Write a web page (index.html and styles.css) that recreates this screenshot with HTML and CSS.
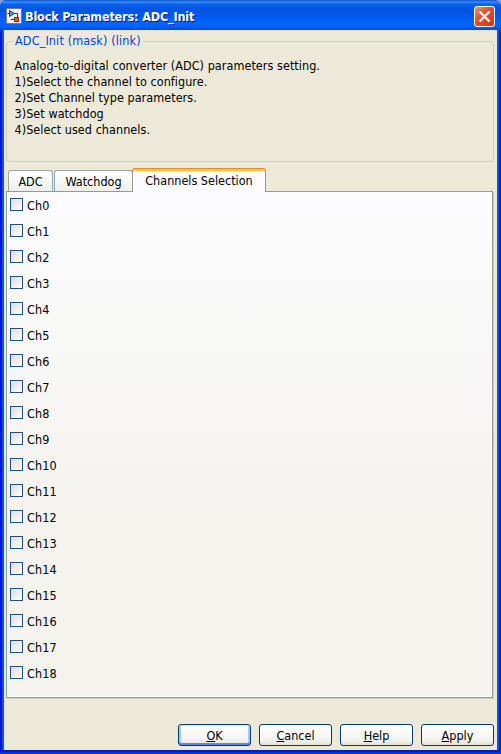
FILE: index.html
```
<!DOCTYPE html>
<html lang="en">
<head>
<meta charset="utf-8">
<title>Block Parameters: ADC_Init</title>
<link rel="stylesheet" href="styles.css">
</head>
<body>
<div class="window">
  <header class="titlebar">
    <svg class="app-icon" width="16" height="16" viewBox="0 0 16 16">
      <rect width="16" height="16" fill="#777"/>
      <rect x="1" y="1" width="14" height="14" fill="#f1efee"/>
      <path d="M8 5.500h3.500V9M1.500 5.500H3M5 11.500H8" fill="none" stroke="#26384a"/>
      <path d="M3.500 2.500v6l5-3z" fill="#35a7cf" stroke="#26475a"/>
      <rect x="8.500" y="9.500" width="4" height="4" fill="#ee541f" stroke="#84341c"/>
    </svg>
    <h1 class="title">Block Parameters: ADC_Init</h1>
    <button class="close" aria-label="Close">
      <svg width="19" height="19" viewBox="0 0 19 19"><path d="M4.500 4.500l10 10M14.500 4.500l-10 10" stroke="#fff" stroke-width="2.300"/></svg>
    </button>
  </header>
  <main class="client">
    <fieldset class="mask">
      <legend>ADC_Init (mask) (link)</legend>
      <p>Analog-to-digital converter (ADC) parameters setting.</p>
      <p>1)Select the channel to configure.</p>
      <p>2)Set Channel type parameters.</p>
      <p>3)Set watchdog</p>
      <p>4)Select used channels.</p>
    </fieldset>
    <nav class="tabs">
      <button class="tab tab-adc">ADC</button>
      <button class="tab tab-watchdog">Watchdog</button>
      <button class="tab tab-channels active">Channels Selection</button>
    </nav>
    <section class="panel">
      <label><input type="checkbox"><span>Ch0</span></label>
      <label><input type="checkbox"><span>Ch1</span></label>
      <label><input type="checkbox"><span>Ch2</span></label>
      <label><input type="checkbox"><span>Ch3</span></label>
      <label><input type="checkbox"><span>Ch4</span></label>
      <label><input type="checkbox"><span>Ch5</span></label>
      <label><input type="checkbox"><span>Ch6</span></label>
      <label><input type="checkbox"><span>Ch7</span></label>
      <label><input type="checkbox"><span>Ch8</span></label>
      <label><input type="checkbox"><span>Ch9</span></label>
      <label><input type="checkbox"><span>Ch10</span></label>
      <label><input type="checkbox"><span>Ch11</span></label>
      <label><input type="checkbox"><span>Ch12</span></label>
      <label><input type="checkbox"><span>Ch13</span></label>
      <label><input type="checkbox"><span>Ch14</span></label>
      <label><input type="checkbox"><span>Ch15</span></label>
      <label><input type="checkbox"><span>Ch16</span></label>
      <label><input type="checkbox"><span>Ch17</span></label>
      <label><input type="checkbox"><span>Ch18</span></label>
    </section>
    <footer class="actions">
      <button class="btn default"><u>O</u>K</button>
      <button class="btn"><u>C</u>ancel</button>
      <button class="btn"><u>H</u>elp</button>
      <button class="btn"><u>A</u>pply</button>
    </footer>
  </main>
</div>
</body>
</html>
```
FILE: styles.css
```
* { box-sizing: border-box; }
body {
  margin: 0;
  background: #7e9ee0;
  font: 12.5px/16px "DejaVu Sans Condensed", "DejaVu Sans", sans-serif;
  color: #000;
}
button { font: inherit; color: inherit; padding: 0; margin: 0; }
.window {
  width: 501px;
  height: 754px;
  display: flex;
  flex-direction: column;
  border-radius: 7px 7px 0 0;
  overflow: hidden;
  background: #0831d9;
}
.titlebar {
  flex: none;
  height: 30px;
  display: flex;
  align-items: center;
  padding: 2px 6px 0;
  background: linear-gradient(#0a50c8 0, #3c8cfa 2px, #0c64ee 4px, #0054e3 9px, #0058ec 16px, #0066ff 24px, #0062f5 27px, #0048d0 30px);
}
.app-icon { flex: none; }
.title {
  margin: 2px 0 0 3px;
  flex: 1;
  font: bold 12.5px/18px "DejaVu Sans Condensed", sans-serif;
  color: #fff;
  text-shadow: 1px 1px #0a1883;
  white-space: nowrap;
  letter-spacing: -.15px;
}
.close {
  width: 21px;
  height: 21px;
  border: 1px solid #fff;
  border-radius: 3px;
  background: linear-gradient(135deg, #ec9478, #e1532d 40%, #c63a12);
}
.close svg { display: block; }
.client {
  flex: 1;
  margin: 0 4px 4px;
  padding: 3px 3px 4px 2px;
  display: flex;
  flex-direction: column;
  background: #ece9d8;
  box-shadow: 0 2px #0019cf, -2px 0 #0855dd, 2px 0 #0855dd, -4px 2px #0019cf, 4px 2px #0019cf;
}
.mask {
  height: 129px;
  min-width: 0;
  margin: 0;
  padding: 9px 0 0 8px;
  border: 1px solid #d0d0bf;
  border-radius: 4px;
}
.mask legend {
  margin-left: -1px;
  padding: 0 2px 0 1px;
  color: #0046d5;
  letter-spacing: .14px;
  white-space: nowrap;
}
.mask p { margin: 0 0 0 -.5px; white-space: nowrap; letter-spacing: .05px; }
.tabs {
  height: 24px;
  margin: 6px 0 -1px;
  padding-left: 2px;
  display: flex;
  align-items: flex-end;
  position: relative;
}
.tab {
  height: 22px;
  border: 1px solid #91a7b4;
  border-bottom-color: #919b9c;
  border-radius: 3px 3px 0 0;
  background: linear-gradient(#fff, #f0f0e9);
}
.tab-adc { width: 45px; margin-right: 1px; }
.tab-watchdog { width: 79px; margin-right: -1px; padding-top: 1px; }
.tab-adc { padding-top: 1px; }
.tab-channels { width: 134px; padding-bottom: 2px; }
.tab.active {
  height: 23px;
  border: 1px solid #919b9c;
  border-top: 2px solid #ffc73c;
  border-bottom: 0;
  background: #fcfcfe;
  box-shadow: 0 -1px #e68b2c;
}
.panel {
  height: 507px;
  width: 487px;
  padding: 0 3px;
  border: 1px solid #919b9c;
  background: linear-gradient(#fcfcfe, #f4f3ee 65%);
  box-shadow: inset -1px -1px #fff, 1px 1px #d0cebf;
}
.panel label {
  height: 26px;
  display: flex;
  align-items: center;
  gap: 4px;
}
.panel span { padding-top: 2px; letter-spacing: .1px; }
.panel input {
  appearance: none;
  width: 13px;
  height: 13px;
  margin: 0 0 1px;
  border: 1px solid #1c5180;
  background: linear-gradient(135deg, #dcdcd7, #fff);
}
.actions {
  margin-top: auto;
  display: flex;
  justify-content: flex-end;
  gap: 8px;
}
.btn {
  width: 73px;
  height: 22px;
  padding-top: 1px;
  border: 1px solid #003c74;
  border-radius: 3px;
  background: linear-gradient(#fff, #f3f3ee 75%, #e5e1d8);
}
.btn u { text-decoration-thickness: 1px; text-underline-offset: 1px; }
.btn.default { box-shadow: inset 0 1px #cee7ff, inset 0 -2px #6982ee, inset 2px 0 #a9c5f5, inset -2px 0 #a9c5f5; }
```
